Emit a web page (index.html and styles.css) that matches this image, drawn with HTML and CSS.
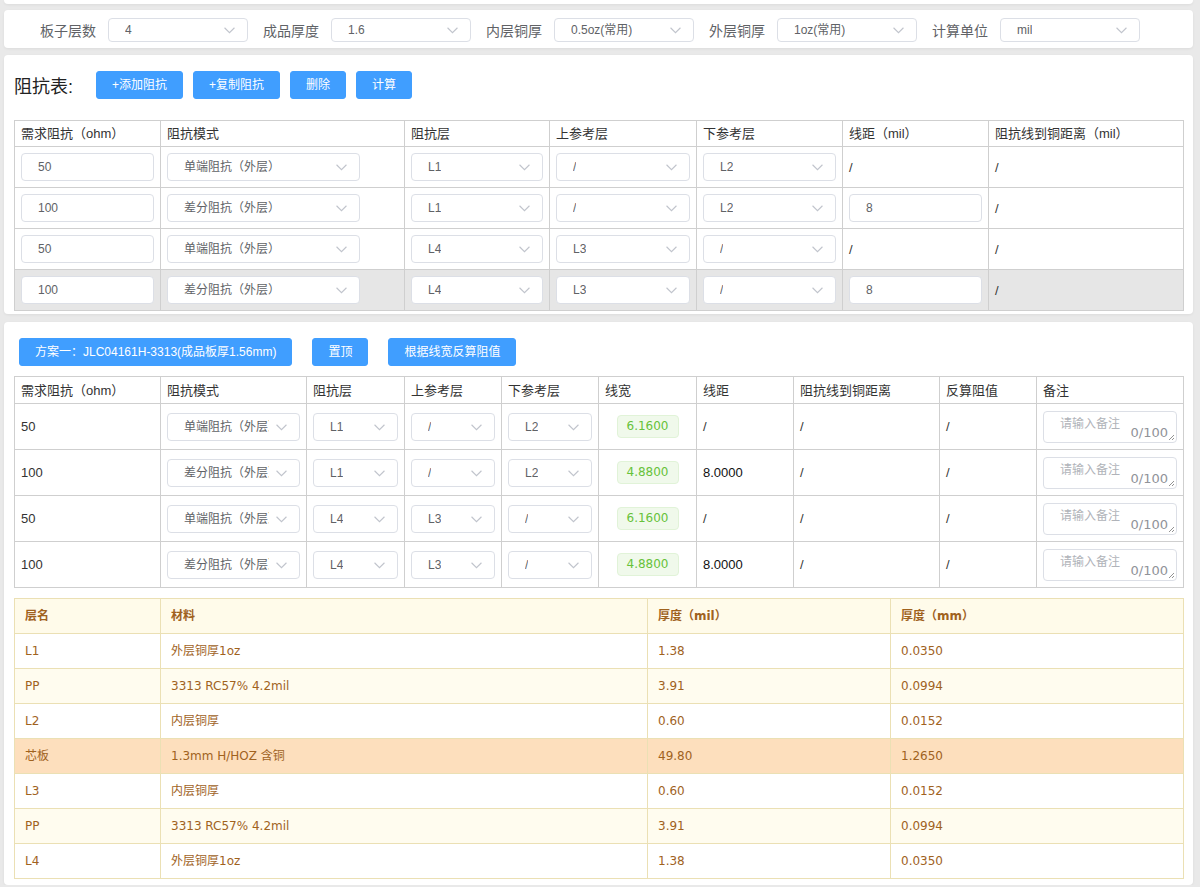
FILE: index.html
```html
<!DOCTYPE html>
<html lang="zh-CN">
<head>
<meta charset="utf-8">
<title>阻抗计算</title>
<link rel="stylesheet" href="styles.css">
</head>
<body>
<div class="card card-cut"></div>

<div class="card card-params">
  <div class="param"><span class="param-label">板子层数</span><div class="sel sel-top"><span>4</span><svg class="arrow" viewBox="0 0 10 6"><path d="M0.5 0.5L5 5 9.5 0.5"/></svg></div></div>
  <div class="param"><span class="param-label">成品厚度</span><div class="sel sel-top"><span>1.6</span><svg class="arrow" viewBox="0 0 10 6"><path d="M0.5 0.5L5 5 9.5 0.5"/></svg></div></div>
  <div class="param"><span class="param-label">内层铜厚</span><div class="sel sel-top"><span>0.5oz(常用)</span><svg class="arrow" viewBox="0 0 10 6"><path d="M0.5 0.5L5 5 9.5 0.5"/></svg></div></div>
  <div class="param"><span class="param-label">外层铜厚</span><div class="sel sel-top"><span>1oz(常用)</span><svg class="arrow" viewBox="0 0 10 6"><path d="M0.5 0.5L5 5 9.5 0.5"/></svg></div></div>
  <div class="param"><span class="param-label">计算单位</span><div class="sel sel-top"><span>mil</span><svg class="arrow" viewBox="0 0 10 6"><path d="M0.5 0.5L5 5 9.5 0.5"/></svg></div></div>
</div>

<div class="card card-imp">
  <div class="toolbar">
    <span class="title">阻抗表:</span>
    <div class="btn-group">
      <button class="btn">+添加阻抗</button>
      <button class="btn">+复制阻抗</button>
      <button class="btn">删除</button>
      <button class="btn">计算</button>
    </div>
  </div>
  <table class="grid grid-imp">
    <colgroup><col style="width:146px"><col style="width:244px"><col style="width:145px"><col style="width:147px"><col style="width:146px"><col style="width:146px"><col style="width:195px"></colgroup>
    <thead><tr><th>需求阻抗（ohm）</th><th>阻抗模式</th><th>阻抗层</th><th>上参考层</th><th>下参考层</th><th>线距（mil）</th><th>阻抗线到铜距离（mil）</th></tr></thead>
    <tbody>
      <tr>
        <td><div class="inp">50</div></td>
        <td><div class="sel sel-mode"><span>单端阻抗（外层）</span><svg class="arrow" viewBox="0 0 10 6"><path d="M0.5 0.5L5 5 9.5 0.5"/></svg></div></td>
        <td><div class="sel"><span>L1</span><svg class="arrow" viewBox="0 0 10 6"><path d="M0.5 0.5L5 5 9.5 0.5"/></svg></div></td>
        <td><div class="sel"><span>/</span><svg class="arrow" viewBox="0 0 10 6"><path d="M0.5 0.5L5 5 9.5 0.5"/></svg></div></td>
        <td><div class="sel"><span>L2</span><svg class="arrow" viewBox="0 0 10 6"><path d="M0.5 0.5L5 5 9.5 0.5"/></svg></div></td>
        <td class="txt">/</td>
        <td class="txt">/</td>
      </tr>
      <tr>
        <td><div class="inp">100</div></td>
        <td><div class="sel sel-mode"><span>差分阻抗（外层）</span><svg class="arrow" viewBox="0 0 10 6"><path d="M0.5 0.5L5 5 9.5 0.5"/></svg></div></td>
        <td><div class="sel"><span>L1</span><svg class="arrow" viewBox="0 0 10 6"><path d="M0.5 0.5L5 5 9.5 0.5"/></svg></div></td>
        <td><div class="sel"><span>/</span><svg class="arrow" viewBox="0 0 10 6"><path d="M0.5 0.5L5 5 9.5 0.5"/></svg></div></td>
        <td><div class="sel"><span>L2</span><svg class="arrow" viewBox="0 0 10 6"><path d="M0.5 0.5L5 5 9.5 0.5"/></svg></div></td>
        <td><div class="inp">8</div></td>
        <td class="txt">/</td>
      </tr>
      <tr>
        <td><div class="inp">50</div></td>
        <td><div class="sel sel-mode"><span>单端阻抗（外层）</span><svg class="arrow" viewBox="0 0 10 6"><path d="M0.5 0.5L5 5 9.5 0.5"/></svg></div></td>
        <td><div class="sel"><span>L4</span><svg class="arrow" viewBox="0 0 10 6"><path d="M0.5 0.5L5 5 9.5 0.5"/></svg></div></td>
        <td><div class="sel"><span>L3</span><svg class="arrow" viewBox="0 0 10 6"><path d="M0.5 0.5L5 5 9.5 0.5"/></svg></div></td>
        <td><div class="sel"><span>/</span><svg class="arrow" viewBox="0 0 10 6"><path d="M0.5 0.5L5 5 9.5 0.5"/></svg></div></td>
        <td class="txt">/</td>
        <td class="txt">/</td>
      </tr>
      <tr class="hover">
        <td><div class="inp">100</div></td>
        <td><div class="sel sel-mode"><span>差分阻抗（外层）</span><svg class="arrow" viewBox="0 0 10 6"><path d="M0.5 0.5L5 5 9.5 0.5"/></svg></div></td>
        <td><div class="sel"><span>L4</span><svg class="arrow" viewBox="0 0 10 6"><path d="M0.5 0.5L5 5 9.5 0.5"/></svg></div></td>
        <td><div class="sel"><span>L3</span><svg class="arrow" viewBox="0 0 10 6"><path d="M0.5 0.5L5 5 9.5 0.5"/></svg></div></td>
        <td><div class="sel"><span>/</span><svg class="arrow" viewBox="0 0 10 6"><path d="M0.5 0.5L5 5 9.5 0.5"/></svg></div></td>
        <td><div class="inp">8</div></td>
        <td class="txt">/</td>
      </tr>
    </tbody>
  </table>
</div>

<div class="card card-plan">
  <div class="plan-bar">
    <button class="btn">方案一：JLC04161H-3313(成品板厚1.56mm)</button>
    <button class="btn">置顶</button>
    <button class="btn">根据线宽反算阻值</button>
  </div>
  <table class="grid grid-res">
    <colgroup><col style="width:146px"><col style="width:146px"><col style="width:98px"><col style="width:97px"><col style="width:97px"><col style="width:98px"><col style="width:97px"><col style="width:146px"><col style="width:97px"><col style="width:147px"></colgroup>
    <thead><tr><th>需求阻抗（ohm）</th><th>阻抗模式</th><th>阻抗层</th><th>上参考层</th><th>下参考层</th><th>线宽</th><th>线距</th><th>阻抗线到铜距离</th><th>反算阻值</th><th>备注</th></tr></thead>
    <tbody>
      <tr>
        <td class="txt">50</td>
        <td><div class="sel"><span>单端阻抗（外层）</span><svg class="arrow" viewBox="0 0 10 6"><path d="M0.5 0.5L5 5 9.5 0.5"/></svg></div></td>
        <td><div class="sel"><span>L1</span><svg class="arrow" viewBox="0 0 10 6"><path d="M0.5 0.5L5 5 9.5 0.5"/></svg></div></td>
        <td><div class="sel"><span>/</span><svg class="arrow" viewBox="0 0 10 6"><path d="M0.5 0.5L5 5 9.5 0.5"/></svg></div></td>
        <td><div class="sel"><span>L2</span><svg class="arrow" viewBox="0 0 10 6"><path d="M0.5 0.5L5 5 9.5 0.5"/></svg></div></td>
        <td class="center"><span class="tag">6.1600</span></td>
        <td class="txt">/</td>
        <td class="txt">/</td>
        <td class="txt">/</td>
        <td><div class="note"><span class="ph">请输入备注</span><span class="count">0/100</span><svg class="grip" viewBox="0 0 8 8"><path d="M7 2L2 7M7 5L5 7"/></svg></div></td>
      </tr>
      <tr>
        <td class="txt">100</td>
        <td><div class="sel"><span>差分阻抗（外层）</span><svg class="arrow" viewBox="0 0 10 6"><path d="M0.5 0.5L5 5 9.5 0.5"/></svg></div></td>
        <td><div class="sel"><span>L1</span><svg class="arrow" viewBox="0 0 10 6"><path d="M0.5 0.5L5 5 9.5 0.5"/></svg></div></td>
        <td><div class="sel"><span>/</span><svg class="arrow" viewBox="0 0 10 6"><path d="M0.5 0.5L5 5 9.5 0.5"/></svg></div></td>
        <td><div class="sel"><span>L2</span><svg class="arrow" viewBox="0 0 10 6"><path d="M0.5 0.5L5 5 9.5 0.5"/></svg></div></td>
        <td class="center"><span class="tag">4.8800</span></td>
        <td class="txt dark">8.0000</td>
        <td class="txt">/</td>
        <td class="txt">/</td>
        <td><div class="note"><span class="ph">请输入备注</span><span class="count">0/100</span><svg class="grip" viewBox="0 0 8 8"><path d="M7 2L2 7M7 5L5 7"/></svg></div></td>
      </tr>
      <tr>
        <td class="txt">50</td>
        <td><div class="sel"><span>单端阻抗（外层）</span><svg class="arrow" viewBox="0 0 10 6"><path d="M0.5 0.5L5 5 9.5 0.5"/></svg></div></td>
        <td><div class="sel"><span>L4</span><svg class="arrow" viewBox="0 0 10 6"><path d="M0.5 0.5L5 5 9.5 0.5"/></svg></div></td>
        <td><div class="sel"><span>L3</span><svg class="arrow" viewBox="0 0 10 6"><path d="M0.5 0.5L5 5 9.5 0.5"/></svg></div></td>
        <td><div class="sel"><span>/</span><svg class="arrow" viewBox="0 0 10 6"><path d="M0.5 0.5L5 5 9.5 0.5"/></svg></div></td>
        <td class="center"><span class="tag">6.1600</span></td>
        <td class="txt">/</td>
        <td class="txt">/</td>
        <td class="txt">/</td>
        <td><div class="note"><span class="ph">请输入备注</span><span class="count">0/100</span><svg class="grip" viewBox="0 0 8 8"><path d="M7 2L2 7M7 5L5 7"/></svg></div></td>
      </tr>
      <tr>
        <td class="txt">100</td>
        <td><div class="sel"><span>差分阻抗（外层）</span><svg class="arrow" viewBox="0 0 10 6"><path d="M0.5 0.5L5 5 9.5 0.5"/></svg></div></td>
        <td><div class="sel"><span>L4</span><svg class="arrow" viewBox="0 0 10 6"><path d="M0.5 0.5L5 5 9.5 0.5"/></svg></div></td>
        <td><div class="sel"><span>L3</span><svg class="arrow" viewBox="0 0 10 6"><path d="M0.5 0.5L5 5 9.5 0.5"/></svg></div></td>
        <td><div class="sel"><span>/</span><svg class="arrow" viewBox="0 0 10 6"><path d="M0.5 0.5L5 5 9.5 0.5"/></svg></div></td>
        <td class="center"><span class="tag">4.8800</span></td>
        <td class="txt dark">8.0000</td>
        <td class="txt">/</td>
        <td class="txt">/</td>
        <td><div class="note"><span class="ph">请输入备注</span><span class="count">0/100</span><svg class="grip" viewBox="0 0 8 8"><path d="M7 2L2 7M7 5L5 7"/></svg></div></td>
      </tr>
    </tbody>
  </table>

  <table class="stack">
    <colgroup><col style="width:146px"><col style="width:487px"><col style="width:243px"><col style="width:293px"></colgroup>
    <thead><tr><th>层名</th><th>材料</th><th>厚度（mil）</th><th>厚度（mm）</th></tr></thead>
    <tbody>
      <tr><td>L1</td><td>外层铜厚1oz</td><td>1.38</td><td>0.0350</td></tr>
      <tr class="pp"><td>PP</td><td>3313 RC57% 4.2mil</td><td>3.91</td><td>0.0994</td></tr>
      <tr><td>L2</td><td>内层铜厚</td><td>0.60</td><td>0.0152</td></tr>
      <tr class="core"><td>芯板</td><td>1.3mm H/HOZ 含铜</td><td>49.80</td><td>1.2650</td></tr>
      <tr><td>L3</td><td>内层铜厚</td><td>0.60</td><td>0.0152</td></tr>
      <tr class="pp"><td>PP</td><td>3313 RC57% 4.2mil</td><td>3.91</td><td>0.0994</td></tr>
      <tr><td>L4</td><td>外层铜厚1oz</td><td>1.38</td><td>0.0350</td></tr>
    </tbody>
  </table>
</div>
</body>
</html>
```

FILE: styles.css
```css
* { box-sizing: border-box; }

html, body {
  margin: 0;
  padding: 0;
}

body {
  background: #e9e9e9;
  padding: 0 7px 0 4px;
  font-family: "Liberation Sans", Arial, "Noto Sans CJK SC", sans-serif;
  font-size: 13px;
  color: #333;
}

.card {
  background: #fff;
  border-radius: 4px;
  box-shadow: 0 1px 3px rgba(0, 0, 0, 0.06);
}

.card-cut {
  height: 4px;
  border-radius: 0 0 4px 4px;
  margin-bottom: 6px;
}

/* parameter bar */
.card-params {
  display: flex;
  align-items: center;
  height: 38px;
  padding: 1px 0 0 36px;
  margin-bottom: 7px;
}

.param {
  display: flex;
  align-items: center;
  margin-right: 15px;
}

.param-label {
  font-size: 14px;
  color: #606266;
  margin-right: 12px;
  white-space: nowrap;
}

.sel {
  position: relative;
  display: flex;
  align-items: center;
  height: 28px;
  padding: 0 30px 0 16px;
  border: 1px solid #dcdfe6;
  border-radius: 4px;
  background: #fff;
  font-size: 12px;
  line-height: 14px;
  color: #606266;
  overflow: hidden;
}

.sel span {
  white-space: nowrap;
  overflow: hidden;
}

.sel .arrow {
  position: absolute;
  right: 12px;
  top: 50%;
  width: 11px;
  height: 7px;
  margin-top: -3px;
  fill: none;
  stroke: #c0c4cc;
  stroke-width: 1;
}

.sel-top {
  width: 140px;
  height: 24px;
}

/* impedance card */
.card-imp {
  height: 259px;
  padding: 16px 10px 0 10px;
  margin-bottom: 8px;
}

.toolbar {
  display: flex;
  align-items: center;
  height: 28px;
  margin-bottom: 21px;
}

.title {
  font-size: 18px;
  color: #222;
  margin-right: 23px;
}

.btn-group {
  display: flex;
  gap: 10px;
}

.btn {
  height: 28px;
  padding: 0 15px;
  border: 1px solid #409eff;
  border-radius: 3px;
  background: #409eff;
  color: #fff;
  font-family: inherit;
  font-size: 12px;
  line-height: 14px;
  white-space: nowrap;
}

/* generic grid tables */
.grid {
  width: 1169px;
  table-layout: fixed;
  border-collapse: collapse;
}

.grid th,
.grid td {
  border: 1px solid #cfcfcf;
  text-align: left;
  vertical-align: middle;
  line-height: 15px;
}

.grid th {
  font-weight: normal;
  font-size: 13px;
  color: #333;
  padding: 0 6px;
  white-space: nowrap;
  overflow: hidden;
}

.grid-imp th { height: 26px; }
.grid-imp td { height: 41px; padding: 0 6px; }
.grid-imp .sel-mode { width: 193px; }

.grid-imp tr.hover td { background: #e6e6e6; }

.grid td.txt {
  font-size: 13px;
  color: #333;
}

.grid td.dark { color: #111; }

.inp {
  display: flex;
  align-items: center;
  height: 28px;
  padding: 0 16px;
  border: 1px solid #dcdfe6;
  border-radius: 4px;
  background: #fff;
  font-size: 12px;
  color: #606266;
}

/* plan card */
.card-plan {
  padding: 16px 10px 6px 10px;
}

.plan-bar {
  display: flex;
  height: 28px;
  gap: 20px;
  padding-left: 5px;
  margin-bottom: 10px;
}

.grid-res th { height: 27px; }
.grid-res td { height: 46px; padding: 0 6px; }

.grid-res td.center { text-align: center; }

.tag {
  display: inline-block;
  height: 23px;
  line-height: 21px;
  padding: 0 9px;
  border: 1px solid #e1f3d8;
  border-radius: 4px;
  background: #f0f9eb;
  color: #67c23a;
  font-family: "DejaVu Sans", Verdana, sans-serif;
  font-size: 12px;
}

.note {
  position: relative;
  height: 32px;
  border: 1px solid #dcdfe6;
  border-radius: 4px;
  background: #fff;
  padding: 4px 0 0 16px;
}

.note .ph {
  font-size: 12px;
  color: #b0b3b9;
}

.note .count {
  position: absolute;
  right: 8px;
  bottom: 2px;
  font-family: "DejaVu Sans", Verdana, sans-serif;
  font-size: 13px;
  line-height: 15px;
  color: #909399;
}

.note .grip {
  position: absolute;
  right: 1px;
  bottom: 1px;
  width: 8px;
  height: 8px;
  fill: none;
  stroke: #777;
  stroke-width: 0.8;
}

/* stack-up table */
.stack {
  width: 1169px;
  margin-top: 10px;
  table-layout: fixed;
  border-collapse: collapse;
  font-family: "DejaVu Sans", Verdana, "Noto Sans CJK SC", sans-serif;
  font-size: 12px;
  line-height: 15px;
  color: #a0621e;
}

.stack th,
.stack td {
  height: 35px;
  padding: 0 10px;
  border: 1px solid #ebe0b4;
  text-align: left;
  vertical-align: middle;
}

.stack th {
  background: #fffbea;
  font-weight: bold;
}

.stack tr.pp td { background: #fffcef; }
.stack tr.core td { background: #fddfbd; }
```
